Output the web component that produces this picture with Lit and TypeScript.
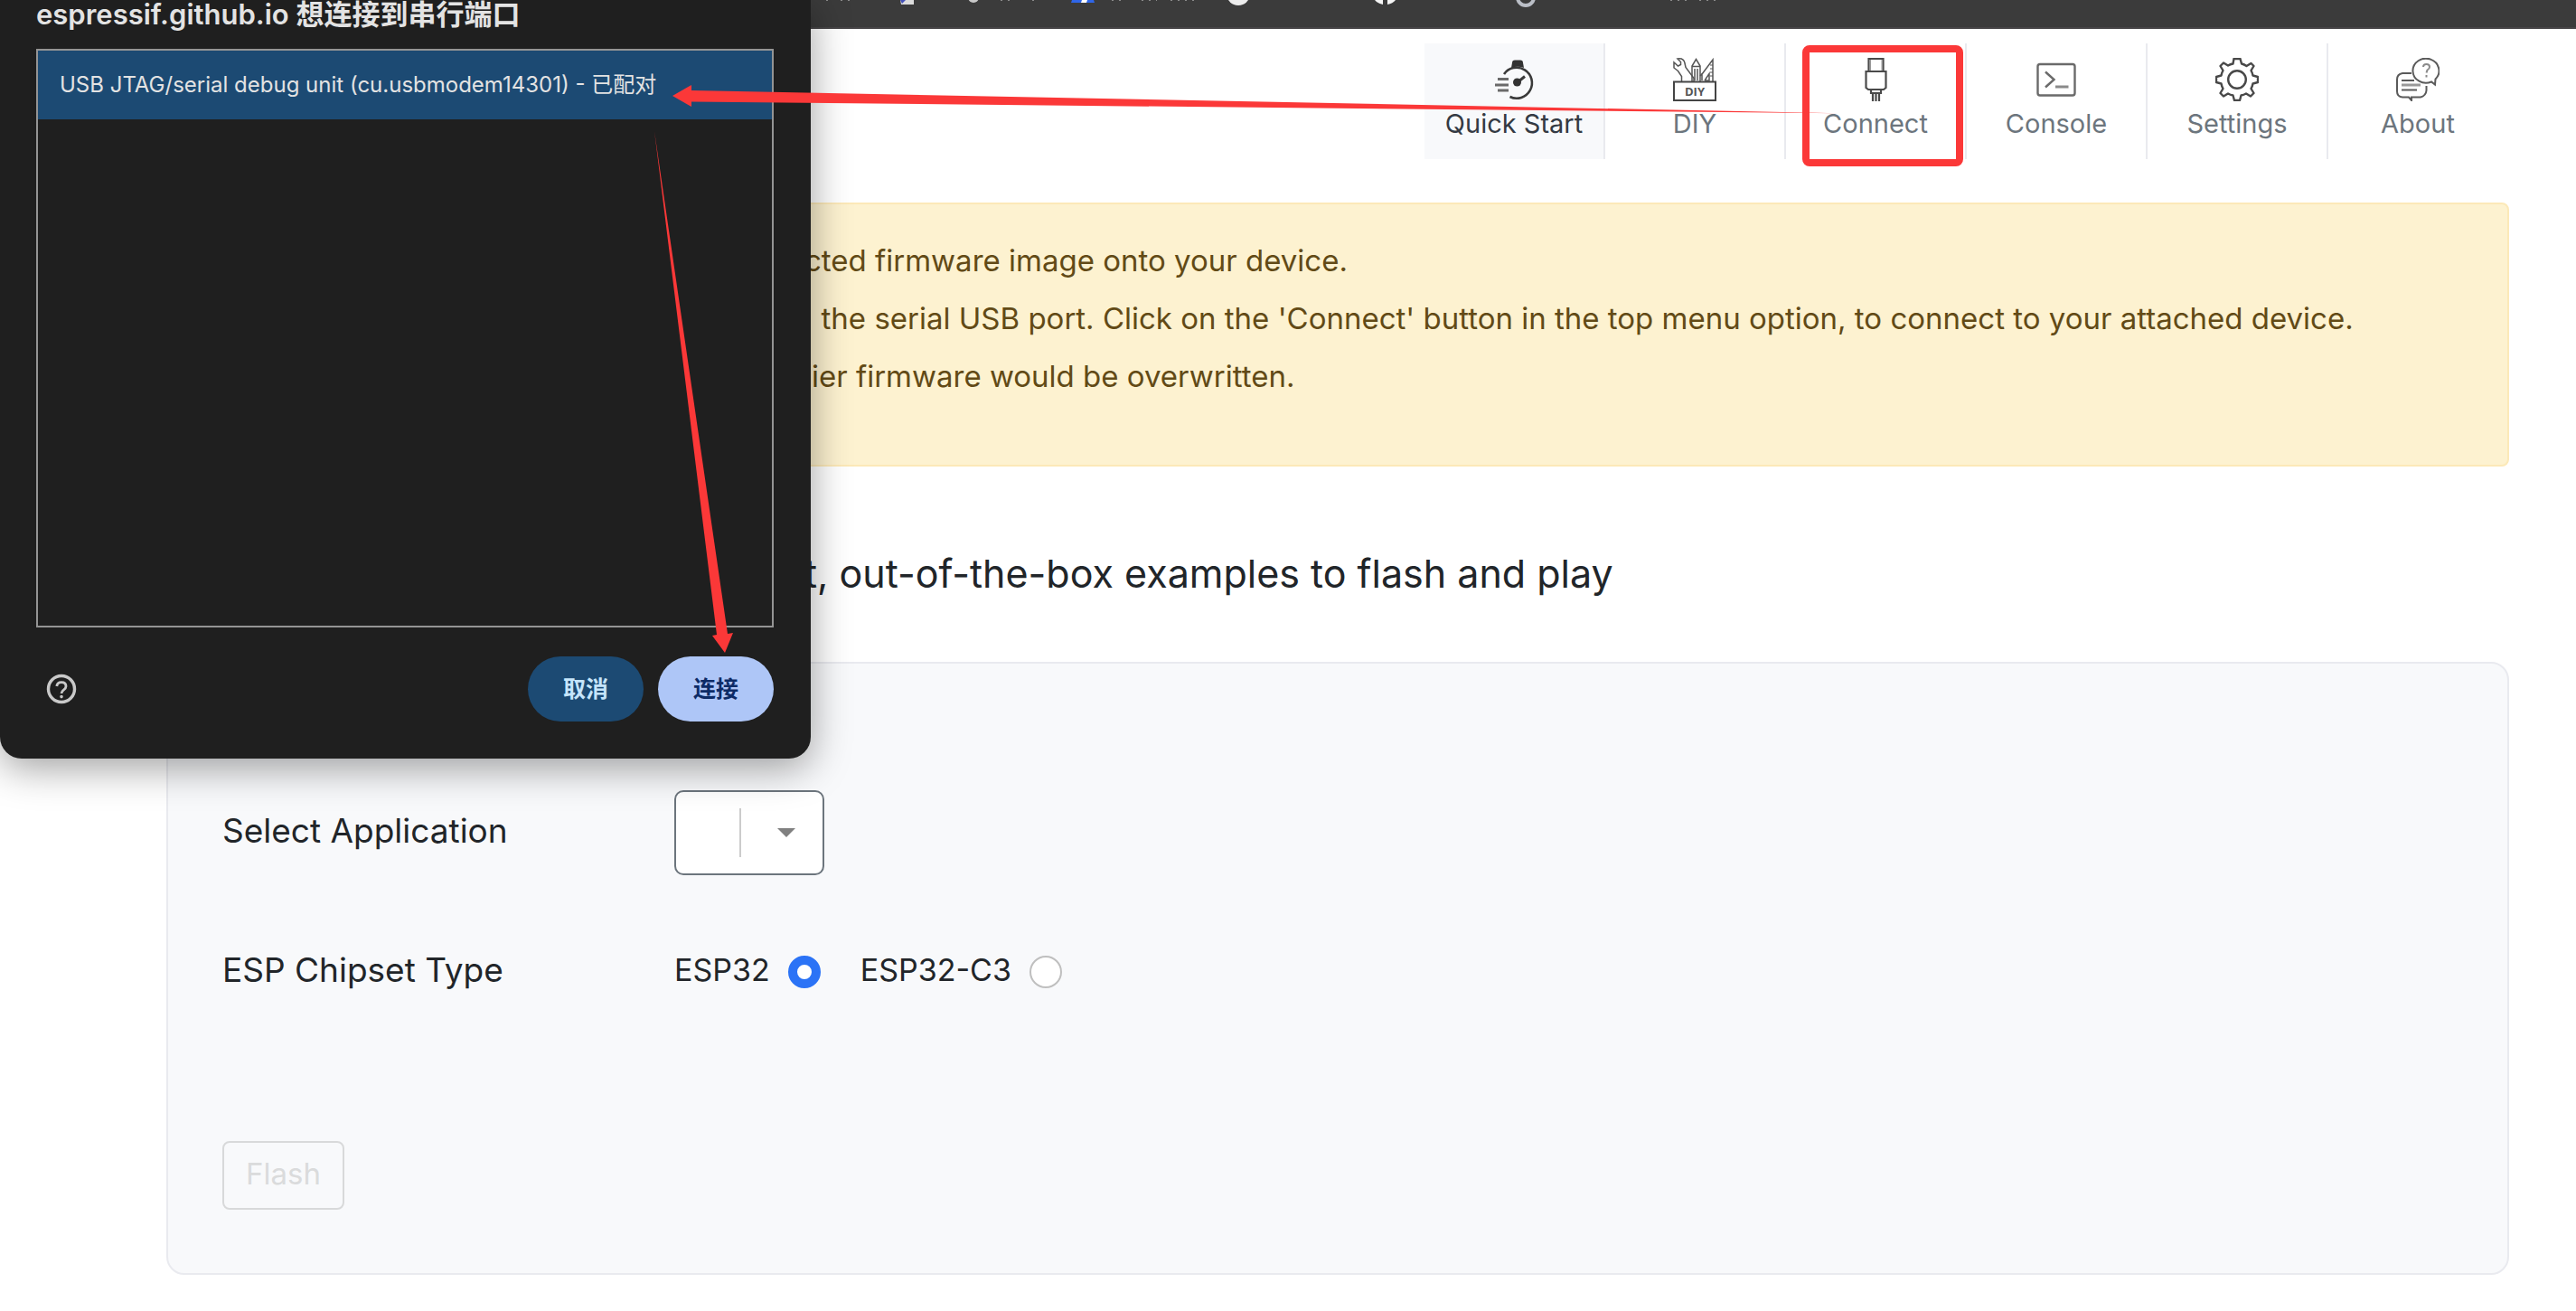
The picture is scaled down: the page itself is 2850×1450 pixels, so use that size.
import { LitElement, html, css, svg } from "lit";
import { customElement, property, state } from "lit/decorators.js";
import { classMap } from "lit/directives/class-map.js";

const icons: Record<string, unknown> = {
  quick: svg`
    <g fill="none" stroke="#3a3a3a" stroke-width="2.6">
      <path d="M13 18A17 17 0 1 1 19.500 43" />
      <path d="M28 27L36 20.500" stroke-width="3" />
      <path d="M6 23.500H18M3 30H18M6 36H18" stroke="#6a6a6a" stroke-width="3" />
    </g>
    <path d="M22 5.500Q22 2.500 25 2.500H31Q34 2.500 34 5.500L35 11Q28 8.500 21 11Z" fill="#333" />
    <circle cx="27.500" cy="27" r="4.500" fill="#333" />`,
  diy: svg`
    <g fill="none" stroke="#555" stroke-width="1.500">
      <path d="M9.500 26V20.500L5.500 14.500L1 11L1 5L5.500 9L8.500 7.500V4.500L5 1Q12 0 13 6L14 10.500L23 22.500V26" />
      <path d="M21 26V9L25.500 1.500L30 9V26M21 9.500H30M24 12V25M27 12V25" />
      <path d="M32 25V18L44 2V26M35 25L40 17.500V25H35M30 20L32 17.500" />
      <path d="M41 8H44M41 12H44M41 16H44M41 20H44" stroke-width="1" />
    </g>
    <rect x="1" y="26.500" width="46" height="20.500" fill="#fff" stroke="#444" stroke-width="2" />
    <text x="24" y="42" text-anchor="middle" class="tiny">DIY</text>`,
  connect: svg`
    <g fill="none" stroke="#4a4a4a" stroke-width="2.200">
      <path d="M16.500 15V1H32.500V15" />
      <path d="M13.500 15H35.500V33L33 35H16L13.500 33Z" />
      <path d="M19 35V39H30V35M21 39V48M24.500 39V48M28 39V48" />
      <path d="M18.500 2V14M31 2V14" stroke="#999" stroke-width="1" />
    </g>`,
  console: svg`
    <g fill="none" stroke="#6a6a6a" stroke-width="2.400">
      <rect x="3.500" y="7" width="41" height="34.500" rx="2.500" />
      <path d="M12 15.500L21.500 24L12 32.500" />
      <path d="M23 32H37.500" stroke="#8a8a8a" stroke-width="3" />
    </g>`,
  settings: svg`
    <g fill="none" stroke="#484848" stroke-width="2.400" stroke-linejoin="round">
      <path d="M20.500 1H27.500L29 6.500Q32 7.200 34.500 9L39.500 6L42.500 9L39.500 14Q41 16.500 41.500 19.500L47 21V27L41.500 28.500Q41 31.500 39.500 34L42.500 39L39 42.500L34 39.500Q31.500 41 28.500 41.500L27 47H21L19.500 41.500Q16.500 41 14 39.500L9 42.500L5.500 39L8.500 34Q7 31.500 6.500 28.500L1 27V21L6.500 19.500Q7 16.500 8.500 14L5.500 9L9 5.500L14 8.500Q16.500 7 19.500 6.500Z" />
      <circle cx="24" cy="24" r="9.800" />
    </g>`,
  about: svg`
    <g fill="none" stroke="#5a5a5a" stroke-width="2">
      <path d="M17 17H7Q1 18 1 24V37Q1 43 7 43.500H14L17 47V43.500H27Q33 42 33.500 36V31" />
      <path d="M39 26.500A14.500 13.500 0 1 1 43.500 23.500L43 29.500Z" />
      <path d="M6 25H20M6 35.500H23" />
      <path d="M6 30H27" stroke="#999" stroke-width="3" />
      <path d="M30 10Q30 7 33.500 7Q37 7 37 10Q37 12 34.500 13.500L33.500 16.500M33.500 19V21.500" stroke="#8a8a8a" />
    </g>`,
};

@customElement("nav-item")
class NavItem extends LitElement {
  @property() icon = "";
  @property() label = "";
  @property({ type: Boolean }) active = false;
  @property({ type: Boolean }) marked = false;

  static styles = css`
    :host { display: block; position: relative; }
    .item {
      box-sizing: border-box; width: 200px; height: 128px; padding: 16px 0 0; margin: 0;
      display: flex; flex-direction: column; align-items: center;
      border: 0; border-right: 2px solid #e9eaef; background: none;
      color: #6c757d; text-decoration: none; cursor: pointer; white-space: nowrap;
      font: 400 29px/40px Inter, "Liberation Sans", sans-serif;
    }
    .active { background: #f8f9fb; color: #343a43; }
    :host(:last-of-type) .item { border-right-color: transparent; }
    .icon { width: 48px; height: 48px; margin-bottom: 5px; flex: none; }
    .tiny { font: 700 13px "Open Sans", sans-serif; fill: #555; }
    .mark {
      position: absolute; top: 2px; left: 18px; right: 4px; bottom: -8px;
      border: 8px solid #fb3838; border-radius: 8px; pointer-events: none;
    }
  `;

  render() {
    return html`
      <button type="button" class=${classMap({ item: true, active: this.active })}>
        <svg class="icon" viewBox="0 0 48 48" aria-hidden="true">${icons[this.icon]}</svg>
        ${this.label}
      </button>
      ${this.marked ? html`<div class="mark"></div>` : ""}
    `;
  }
}

@customElement("port-dialog")
class PortDialog extends LitElement {
  static styles = css`
    :host {
      box-sizing: border-box; display: flex; flex-direction: column; width: 897px;
      padding: 0 41px 41px 40px; background: #1f1f1f; color: #e3e3e3;
      border-radius: 0 0 24px 24px; box-shadow: 0 10px 44px rgba(0, 0, 0, 0.38);
      font-family: Inter, "Noto Sans CJK SC", sans-serif;
    }
    .title { margin: 0; height: 54px; font-size: 31px; font-weight: 600; line-height: 32px; }
    .ports {
      box-sizing: border-box; height: 640px; margin: 0; padding: 0; list-style: none;
      border: 2px solid #949494;
    }
    .port { padding: 0 24px; background: #1c4a73; font-size: 24px; line-height: 76px; }
    .actions { display: flex; align-items: center; gap: 16px; margin-top: 32px; }
    .help { margin: 0 auto 0 8px; padding: 0; width: 40px; height: 40px; border: 0; background: none; }
    .help svg { display: block; width: 40px; height: 40px; }
    .action {
      width: 128px; height: 72px; padding: 0; border: 0; border-radius: 36px;
      font: 600 25px/36px Inter, "Noto Sans CJK SC", sans-serif;
    }
    .cancel { background: #1c4a73; color: #c5e5fb; }
    .confirm { background: #aec6f7; color: #0d2b66; }
  `;

  render() {
    return html`
      <h2 class="title">espressif.github.io 想连接到串行端口</h2>
      <ul class="ports" role="listbox" aria-label="Ports">
        <li class="port" role="option" aria-selected="true">USB JTAG/serial debug unit (cu.usbmodem14301) - 已配对</li>
      </ul>
      <div class="actions">
        <button class="help" type="button" aria-label="Help">
          <svg viewBox="0 0 40 40" fill="none" stroke="#c9c9c9">
            <circle cx="20" cy="20" r="14.500" stroke-width="3.400" />
            <path d="M14.800 17Q15.200 12.600 20 12.600Q25 12.600 25 17Q25 19 22.500 21Q20 23 20 25" stroke-width="2.800" />
            <circle cx="20" cy="28.600" r="1" stroke-width="1.600" />
          </svg>
        </button>
        <button class="action cancel" type="button">取消</button>
        <button class="action confirm" type="button">连接</button>
      </div>
    `;
  }
}

@customElement("app-root")
class AppRoot extends LitElement {
  @state() private chip = "ESP32";

  static styles = css`
    :host {
      display: block; position: relative; min-height: 100vh; overflow: hidden;
      background: #fff; color: #212529;
      font-family: Inter, "Liberation Sans", sans-serif;
    }
    .bookmarks { height: 30px; background: #3b3b3b; border-bottom: 2px solid #474547; }
    .bookmarks svg { display: block; }
    .page { padding: 16px 74px 40px 184px; }
    .nav { display: flex; justify-content: flex-end; }
    .alert {
      box-sizing: border-box; height: 292px; margin-top: 48px; padding: 30px 24px 0 704px;
      background: #fdf2d0; border: 2px solid #fce9b8; border-radius: 8px; color: #624a16;
      font-size: 33px; line-height: 64px;
    }
    .alert p { margin: 0; white-space: pre; }
    .heading {
      margin: 88px 0 68px; padding-left: 706px; font-size: 43px; font-weight: 400;
      line-height: 60px; white-space: nowrap;
    }
    .panel {
      box-sizing: border-box; padding: 140px 60px 70px; background: #f8f9fb;
      border: 2px solid #e9eaef; border-radius: 20px;
    }
    .row { display: flex; align-items: center; min-height: 94px; }
    .name { width: 500px; padding-bottom: 6px; font-size: 37px; }
    .chips { margin-top: 60px; }
    .pick { position: relative; width: 166px; height: 94px; }
    .pick select {
      width: 100%; height: 100%; padding: 0 90px 0 16px; appearance: none;
      background: #fff; border: 2px solid #6c757d; border-radius: 10px; font-size: 32px;
    }
    .pick::before {
      content: ""; position: absolute; left: 72px; top: 20px; width: 2px; height: 54px;
      background: #ccc; z-index: 1;
    }
    .pick::after {
      content: ""; position: absolute; left: 114px; top: 42px; pointer-events: none;
      border: 10px solid transparent; border-top-color: #808080; border-bottom: 0;
    }
    .chip { display: flex; align-items: center; gap: 20px; margin-right: 44px; font-size: 34px; }
    .chip-name { padding-bottom: 6px; }
    .chip input {
      box-sizing: border-box; width: 36px; height: 36px; margin: 0; appearance: none;
      border: 2px solid #bfbfbf; border-radius: 50%; background: #fff;
    }
    .chip input:checked { border: 10px solid #2b73f6; }
    .flash {
      display: block; box-sizing: border-box; height: 76px; margin-top: 140px; padding: 0 24px 4px;
      background: none; border: 2px solid #d8d9da; border-radius: 8px; color: #dadbdc;
      font: 400 33px/40px Inter, "Liberation Sans", sans-serif;
    }
    .dialog { position: absolute; top: 0; left: 0; z-index: 2; }
    .arrows { position: absolute; top: 0; left: 0; z-index: 3; pointer-events: none; }
  `;

  private chipOption(name: string) {
    return html`<label class="chip"><span class="chip-name">${name}</span>
      <input type="radio" name="chip" .checked=${this.chip === name} @change=${() => (this.chip = name)} />
    </label>`;
  }

  render() {
    return html`
      <div class="bookmarks">
        <svg width="2850" height="8" aria-hidden="true">
          <path d="M996 0H1011V5H997Z" fill="#dcdcdc" />
          <path d="M996 0H1002L998 4Z" fill="#4451b8" />
          <circle cx="1077" cy="-3" r="6" fill="#c8c8c8" />
          <path d="M1186 0H1210L1211 3H1185Z" fill="#2f66e8" />
          <path d="M1197 0H1203L1202 3H1196Z" fill="#fff" />
          <circle cx="1370" cy="-7" r="13" fill="#ececec" />
          <path d="M1521 0H1530V5Q1524 4 1521 0ZM1535 0H1544Q1541 4 1535 5Z" fill="#f4f4f4" />
          <circle cx="1688" cy="-3" r="9" fill="none" stroke="#babec6" stroke-width="4" />
          <path d="M914 0H918M930 0H944M1107 0H1117M1142 0H1146M1230 0H1246M1263 0H1280M1295 0H1322M1848 0H1870M1880 0H1898" stroke="#8a8a8a" stroke-width="2" stroke-dasharray="2 6" />
        </svg>
      </div>
      <main class="page">
        <nav class="nav">
          <nav-item icon="quick" label="Quick Start" active></nav-item>
          <nav-item icon="diy" label="DIY"></nav-item>
          <nav-item icon="connect" label="Connect" marked></nav-item>
          <nav-item icon="console" label="Console"></nav-item>
          <nav-item icon="settings" label="Settings"></nav-item>
          <nav-item icon="about" label="About"></nav-item>
        </nav>
        <div class="alert">
          <p>cted firmware image onto your device.</p>
          <p>  the serial USB port. Click on the 'Connect' button in the top menu option, to connect to your attached device.</p>
          <p>lier firmware would be overwritten.</p>
        </div>
        <h1 class="heading">t, out-of-the-box examples to flash and play</h1>
        <form class="panel">
          <div class="row">
            <label class="name" for="application">Select Application</label>
            <div class="pick"><select id="application"><option></option></select></div>
          </div>
          <div class="row chips" role="radiogroup" aria-labelledby="chipset">
            <span class="name" id="chipset">ESP Chipset Type</span>
            ${this.chipOption("ESP32")}${this.chipOption("ESP32-C3")}
          </div>
          <button class="flash" type="button" disabled>Flash</button>
        </form>
      </main>
      <port-dialog class="dialog" role="dialog"></port-dialog>
      <svg class="arrows" width="2850" height="1450" fill="#fb3838" aria-hidden="true">
        <path d="M744 106L765 94V100L2049 125.500L765 112.500V118Z" />
        <path d="M724 145L805 701L811 700L802 722L788 703L793 702Z" />
      </svg>
    `;
  }
}
